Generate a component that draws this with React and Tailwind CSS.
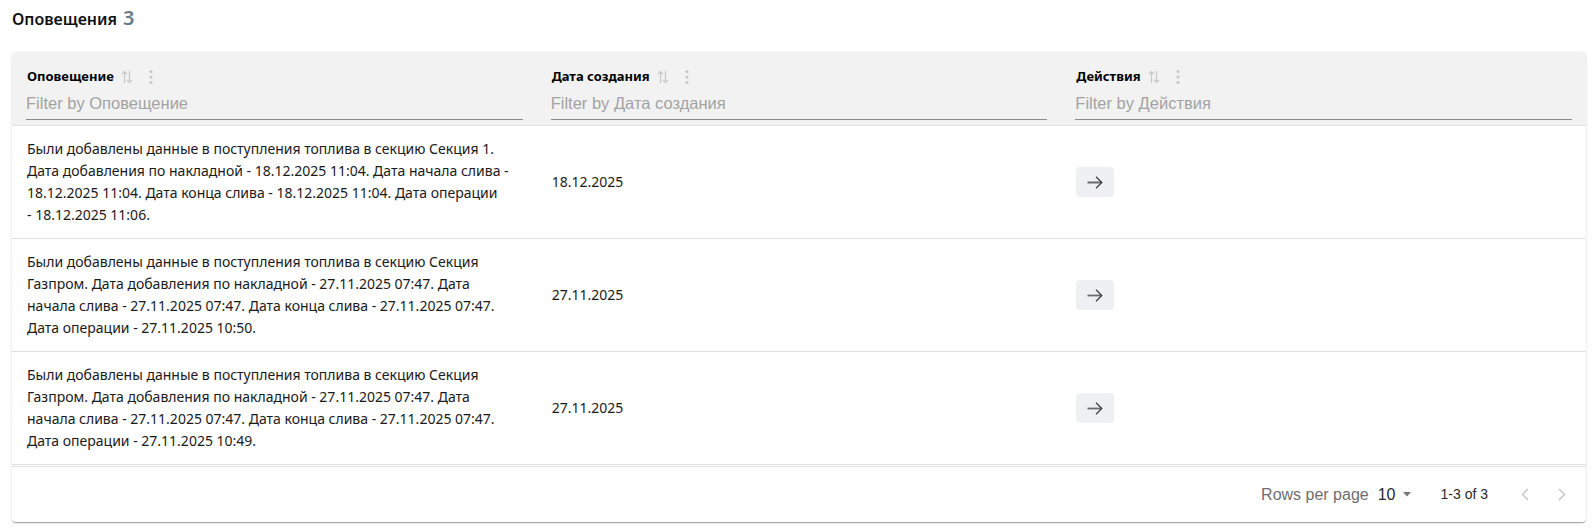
import React from "react";

const rows = [
  {
    lines: [
      "Были добавлены данные в поступления топлива в секцию Секция 1.",
      "Дата добавления по накладной - 18.12.2025 11:04. Дата начала слива -",
      "18.12.2025 11:04. Дата конца слива - 18.12.2025 11:04. Дата операции",
      "- 18.12.2025 11:06.",
    ],
    date: "18.12.2025",
  },
  {
    lines: [
      "Были добавлены данные в поступления топлива в секцию Секция",
      "Газпром. Дата добавления по накладной - 27.11.2025 07:47. Дата",
      "начала слива - 27.11.2025 07:47. Дата конца слива - 27.11.2025 07:47.",
      "Дата операции - 27.11.2025 10:50.",
    ],
    date: "27.11.2025",
  },
  {
    lines: [
      "Были добавлены данные в поступления топлива в секцию Секция",
      "Газпром. Дата добавления по накладной - 27.11.2025 07:47. Дата",
      "начала слива - 27.11.2025 07:47. Дата конца слива - 27.11.2025 07:47.",
      "Дата операции - 27.11.2025 10:49.",
    ],
    date: "27.11.2025",
  },
];

const columns = ["Оповещение", "Дата создания", "Действия"];

function SortIcon() {
  return (
    <svg width="12" height="14" viewBox="0 0 12 14" fill="none" stroke="#c8c8c8" strokeWidth="1.2">
      <path d="M3.5 13V1.5M1 4l2.5-2.5L6 4" />
      <path d="M8.5 1v11.5M6 10l2.5 2.5L11 10" />
    </svg>
  );
}

function Kebab() {
  return (
    <svg width="4" height="16" viewBox="0 0 4 16" fill="#c8c8c8">
      <circle cx="2" cy="2.5" r="1.6" />
      <circle cx="2" cy="8" r="1.6" />
      <circle cx="2" cy="13.5" r="1.6" />
    </svg>
  );
}

function Arrow() {
  return (
    <svg width="16" height="13" viewBox="0 0 16 13" fill="none" stroke="#3a3a3a" strokeWidth="1.2">
      <path d="M0.5 6.5H15" strokeWidth="1.8" stroke="#6a6a6a" />
      <path d="M9 0.8l5.8 5.7L9 12.2" />
    </svg>
  );
}

export default function App() {
  return (
    <div className="bg-white min-h-[530px] w-[1593px]" style={{ fontFamily: "'Noto Sans', sans-serif" }}>
      <div className="pt-[8px] pl-[12px] flex items-baseline leading-[20px]">
        <span className="text-[16px] font-semibold text-[#111]">Оповещения</span>
        <span className="ml-[6px] text-[20px] font-semibold text-[#6b7a8c]">3</span>
      </div>
      <div className="mt-[23px] ml-[12px] w-[1574px] rounded-[4px] bg-white shadow-[0_2px_1px_-1px_rgba(0,0,0,0.2),0_1px_1px_0_rgba(0,0,0,0.14),0_1px_3px_0_rgba(0,0,0,0.12)] overflow-hidden">
        {/* header */}
        <div className="grid grid-cols-3 bg-[#f2f2f2] border-b border-[#e2e2e2]">
          {columns.map((c) => (
            <div key={c} className="px-[14px] pt-[15px] pb-[5px]">
              <div className="flex items-center h-[20px] pl-[1px]">
                <span className="text-[13px] font-bold text-black">{c}</span>
                <span className="ml-[7px] flex items-center"><SortIcon /></span>
                <span className="ml-[16px] flex items-center"><Kebab /></span>
              </div>
              <div
                className="h-[33px] border-b border-[#8c8c8c] flex items-center text-[16.5px] text-[#a3a3a3]"
                style={{ fontFamily: "'Liberation Sans', Arial, sans-serif" }}
              >
                Filter by {c}
              </div>
            </div>
          ))}
        </div>
        {/* rows */}
        {rows.map((r, i) => (
          <div key={i} className="grid grid-cols-3 border-b border-[#e0e0e0] text-[14px] leading-[22px] text-[#1a1a1a]">
            <div className="pl-[15px] pr-[14px] py-[12px] min-h-[112px] flex flex-col justify-center">
              {r.lines.map((l, j) => (
                <div key={j} className="whitespace-nowrap">{l}</div>
              ))}
            </div>
            <div className="pl-[15px] pr-[14px] flex items-center">{r.date}</div>
            <div className="px-[14px] flex items-center">
              <button className="ml-[1px] w-[38px] h-[30px] rounded-[4px] bg-[#eef0f4] flex items-center justify-center">
                <Arrow />
              </button>
            </div>
          </div>
        ))}
        {/* footer */}
        <div
          className="mt-[1px] border-t border-[#e0e0e0] h-[56px] flex items-center justify-end pr-[20px]"
          style={{ fontFamily: "'Liberation Sans', Arial, sans-serif" }}
        >
          <span className="text-[16px] text-[#6e6e6e]">Rows per page</span>
          <span className="ml-[9px] text-[16px] text-[#2a2a2a]">10</span>
          <svg className="ml-[7px]" width="8" height="5" viewBox="0 0 8 5" fill="#777">
            <path d="M0 0h8L4 4.5z" />
          </svg>
          <span className="ml-[30px] text-[14px] text-[#2a2a2a]">1-3 of 3</span>
          <svg className="ml-[33px]" width="8" height="13" viewBox="0 0 8 13" fill="none" stroke="#c4c4c4" strokeWidth="1.4">
            <path d="M7 1L1.5 6.5L7 12" />
          </svg>
          <svg className="ml-[29px]" width="8" height="13" viewBox="0 0 8 13" fill="none" stroke="#c4c4c4" strokeWidth="1.4">
            <path d="M1 1l5.5 5.5L1 12" />
          </svg>
        </div>
      </div>
    </div>
  );
}
